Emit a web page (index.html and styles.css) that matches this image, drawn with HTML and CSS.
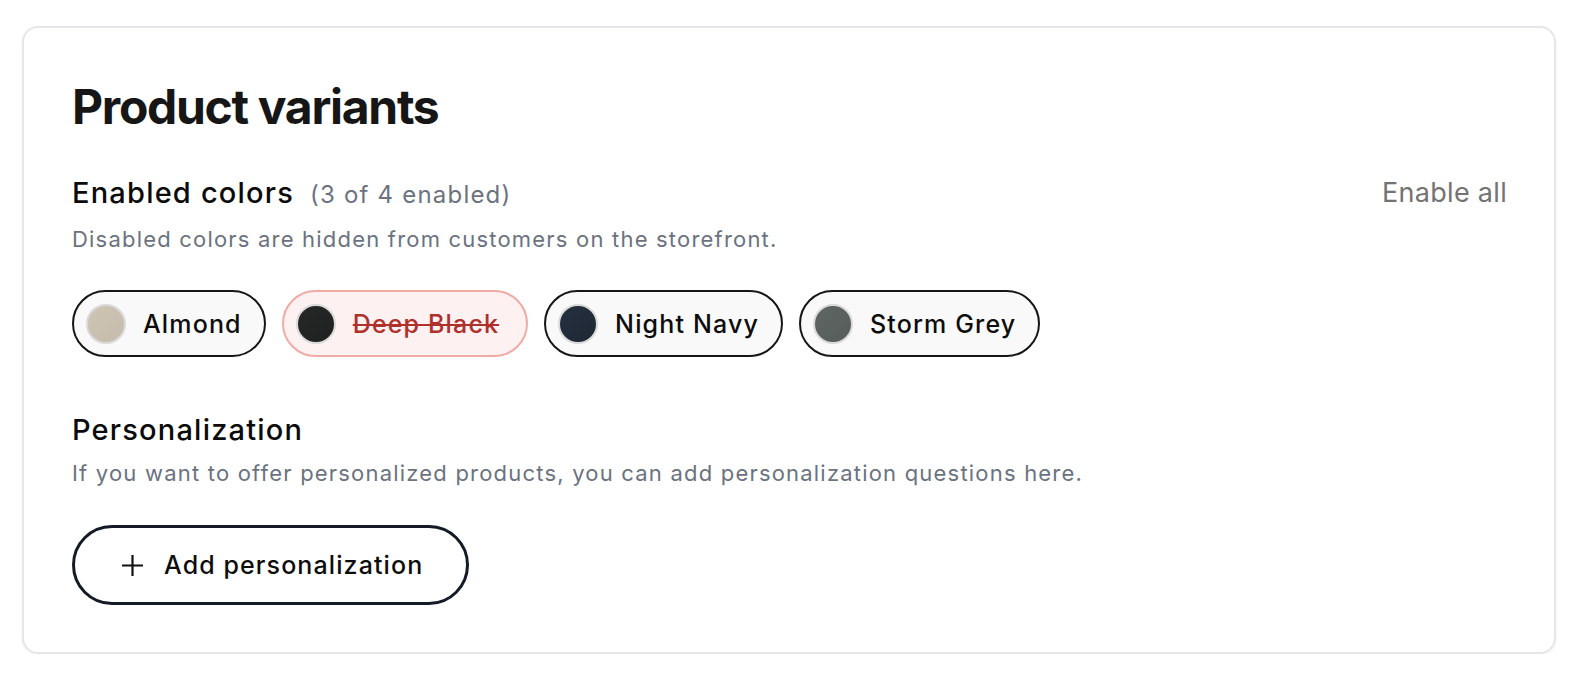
FILE: index.html
```html
<!DOCTYPE html>
<html lang="en">
<head>
<meta charset="utf-8">
<title>Product variants</title>
<link rel="stylesheet" href="styles.css">
</head>
<body>
<section class="card">
  <h1 class="title">Product variants</h1>

  <div class="section">
    <div class="section-head">
      <div>
        <h2 class="section-title">Enabled colors<span class="count">(3 of 4 enabled)</span></h2>
        <p class="desc desc-colors">Disabled colors are hidden from customers on the storefront.</p>
      </div>
      <button class="link-btn" type="button">Enable all</button>
    </div>
    <div class="chips">
      <button class="chip" type="button"><span class="swatch almond"></span><span class="chip-label">Almond</span></button>
      <button class="chip chip-off" type="button"><span class="swatch black"></span><span class="chip-label">Deep Black</span></button>
      <button class="chip" type="button"><span class="swatch navy"></span><span class="chip-label">Night Navy</span></button>
      <button class="chip" type="button"><span class="swatch grey"></span><span class="chip-label">Storm Grey</span></button>
    </div>
  </div>

  <div class="section section-2">
    <h2 class="section-title">Personalization</h2>
    <p class="desc">If you want to offer personalized products, you can add personalization questions here.</p>
    <button class="add-btn" type="button">
      <svg class="plus" width="21" height="21" viewBox="0 0 21 21" aria-hidden="true"><path d="M10.5 0v21M0 10.5h21" stroke="#111" stroke-width="2.2" fill="none"/></svg>
      <span class="add-label">Add personalization</span>
    </button>
  </div>
</section>
</body>
</html>
```

FILE: styles.css
```css
* { box-sizing: border-box; }
body {
  margin: 0;
  padding: 26px 38px 0 22px;
  background: #ffffff;
  font-family: Inter, "Liberation Sans", sans-serif;
  color: #111111;
}
.card {
  border: 2px solid #e6e6ea;
  border-radius: 16px;
  padding: 50px 47px 47px 48px;
  box-shadow: 0 1px 3px rgba(0,0,0,0.05);
}
.title {
  margin: 0;
  font-size: 48px;
  font-weight: 700;
  letter-spacing: -1.3px;
  line-height: 58px;
  color: #161616;
}
.section { margin-top: 39px; }
.section-head {
  display: flex;
  justify-content: space-between;
  align-items: flex-start;
}
.section-title {
  margin: 0;
  font-size: 29px;
  font-weight: 500;
  letter-spacing: 1.2px;
  line-height: 36px;
  color: #0b0b0b;
}
.count {
  font-size: 24px;
  font-weight: 400;
  letter-spacing: 1.2px;
  line-height: 1;
  color: #6b7280;
  margin-left: 16px;
}
.desc {
  margin: 10px 0 0;
  font-size: 22px;
  letter-spacing: 1.2px;
  line-height: 30px;
  color: #6b7280;
}
.desc-colors { margin-top: 13px; }
.link-btn {
  background: none;
  border: 0;
  padding: 0;
  margin-top: 0;
  font-family: inherit;
  font-size: 27px;
  letter-spacing: 0.3px;
  line-height: 36px;
  color: #737373;
}
.chips {
  display: flex;
  gap: 16px;
  margin-top: 36px;
}
.chip {
  display: flex;
  align-items: center;
  gap: 17px;
  height: 67px;
  padding: 0 22px 0 12px;
  border: 2px solid #161616;
  border-radius: 34px;
  background: #f9f9f9;
  font-family: inherit;
  font-size: 25px;
  font-weight: 500;
  letter-spacing: 1.15px;
  color: #0d0d0d;
}
.swatch {
  width: 40px;
  height: 40px;
  border-radius: 50%;
  border: 2px solid #dadada;
  flex: none;
}
.almond { background: linear-gradient(135deg, #cdc4b4, #c6bcab); }
.black { background: linear-gradient(135deg, #262827, #1f2120); }
.navy { background: linear-gradient(135deg, #25303e, #1e2835); }
.grey { background: linear-gradient(135deg, #5e6563, #565d5b); }
.chip-off {
  padding-right: 27px;
  border-color: #f1aaa4;
  background: #fdf1f1;
  color: #b0302a;
}
.chip-off .chip-label {
  text-decoration: line-through;
  text-decoration-thickness: 2px;
}
.section-2 { margin-top: 55px; }
.add-btn {
  display: flex;
  align-items: center;
  gap: 21px;
  margin-top: 37px;
  height: 80px;
  padding: 0 43px 0 47px;
  border: 3px solid #141a26;
  border-radius: 40px;
  background: #ffffff;
  font-family: inherit;
  font-size: 25px;
  font-weight: 500;
  letter-spacing: 1.1px;
  color: #0d0d0d;
}
.plus { flex: none; }
```
